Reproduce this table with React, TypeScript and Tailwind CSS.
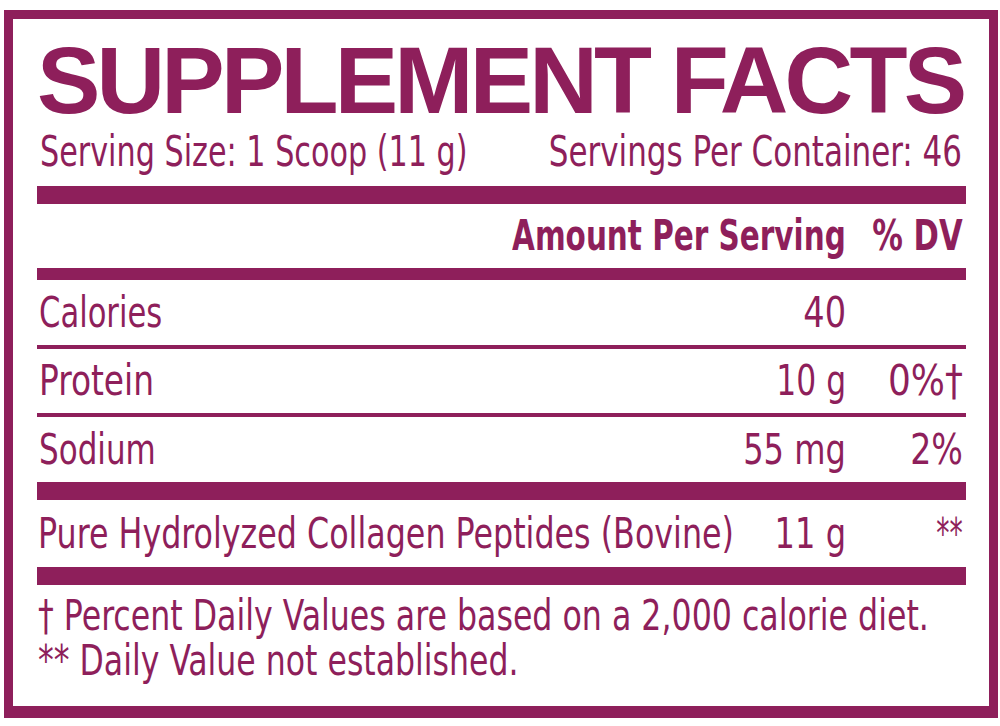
import React from "react";

const FONT = '"DejaVu Sans Condensed", "DejaVu Sans", sans-serif';

function S({ c, children }: { c: string; children: React.ReactNode }) {
  return <span className={`inline-block whitespace-nowrap shrink-0 ${c}`}>{children}</span>;
}

function Row({
  label,
  amount,
  dv,
  h,
  lc,
  ac,
  dc,
}: {
  label: string;
  amount: string;
  dv: string;
  h: string;
  lc: string;
  ac: string;
  dc: string;
}) {
  return (
    <div className={`flex items-center ${h} pr-[3px] leading-none text-[42px]`}>
      <div className="flex flex-1 min-w-0">
        <S c={lc}>{label}</S>
      </div>
      <div className="flex justify-end w-[140px]">
        <S c={ac}>{amount}</S>
      </div>
      <div className="flex justify-end w-[117px]">
        <S c={dc}>{dv}</S>
      </div>
    </div>
  );
}

function Bar({ h }: { h: string }) {
  return <div className={`${h} bg-[#8e1f5b]`} />;
}

export default function App() {
  return (
    <div className="w-[1000px] h-[726px] bg-white pt-[10px] pl-[4px]">
      <div
        className="w-[994px] h-[708px] border-[9px] border-b-[12px] border-[#8e1f5b] pt-[13px] pl-[24px] pr-[23px] text-[#8e1f5b]"
        style={{ fontFamily: FONT }}
      >
        <div
          className="h-[96px] leading-[96px] text-[95px] font-bold tracking-[-3.8px] whitespace-nowrap"
          style={{ fontFamily: '"Liberation Sans", Arial, sans-serif' }}
        >
          SUPPLEMENT FACTS
        </div>
        <div className="flex justify-between h-[48px] leading-[48px] text-[42px] pl-[3px] pr-[4px]">
          <S c="origin-left scale-x-[0.8] -mr-[106px]">Serving Size: 1 Scoop (11 g)</S>
          <S c="origin-right scale-x-[0.82] -ml-[91px]">Servings Per Container: 46</S>
        </div>
        <div className="mt-[10px]">
          <Bar h="h-[18px]" />
        </div>
        <div className="flex items-center justify-end h-[64px] text-[42px] font-bold leading-none pr-[3px]">
          <S c="origin-right scale-x-[0.78]">Amount Per Serving</S>
          <div className="flex justify-end w-[117px]">
            <S c="origin-right scale-x-[0.81]">% DV</S>
          </div>
        </div>
        <Bar h="h-[12px]" />
        <div className="pl-[2px]">
          <Row
            label="Calories"
            amount="40"
            dv=""
            h="h-[65px]"
            lc="origin-left scale-x-[0.81]"
            ac="origin-right scale-x-[0.89]"
            dc="origin-right"
          />
        </div>
        <Bar h="h-[4px]" />
        <div className="pl-[2px]">
          <Row
            label="Protein"
            amount="10 g"
            dv="0%†"
            h="h-[64px]"
            lc="origin-left scale-x-[0.87]"
            ac="origin-right scale-x-[0.83]"
            dc="origin-right scale-x-[0.95]"
          />
        </div>
        <Bar h="h-[4px]" />
        <div className="pl-[2px]">
          <Row
            label="Sodium"
            amount="55 mg"
            dv="2%"
            h="h-[65px]"
            lc="origin-left scale-x-[0.82]"
            ac="origin-right scale-x-[0.85]"
            dc="origin-right scale-x-[0.88]"
          />
        </div>
        <Bar h="h-[18px]" />
        <div className="pl-[1px]">
          <Row
            label="Pure Hydrolyzed Collagen Peptides (Bovine)"
            amount="11 g"
            dv="**"
            h="h-[67px]"
            lc="origin-left scale-x-[0.84]"
            ac="origin-right scale-x-[0.85]"
            dc="origin-right scale-x-[0.7]"
          />
        </div>
        <Bar h="h-[18px]" />
        <div className="mt-[8px] text-[42px] leading-[45px] pl-[1px]">
          <div className="flex">
            <S c="origin-left scale-x-[0.837]">† Percent Daily Values are based on a 2,000 calorie diet.</S>
          </div>
          <div className="flex">
            <S c="origin-left scale-x-[0.835]">** Daily Value not established.</S>
          </div>
        </div>
      </div>
    </div>
  );
}
